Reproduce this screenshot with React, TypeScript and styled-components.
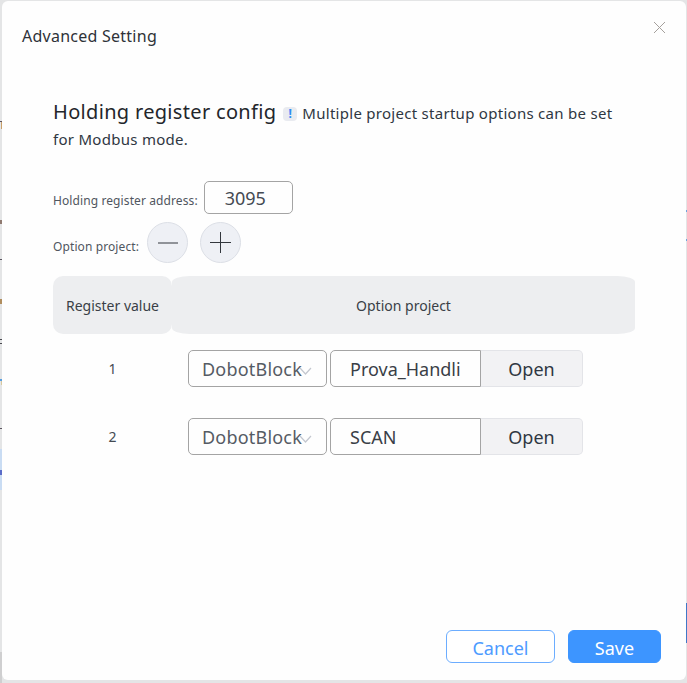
import React from "react";
import styled, { createGlobalStyle } from "styled-components";

const Global = createGlobalStyle`
  html, body { margin: 0; padding: 0; background: #e6e6e7; }
  body { font-family: "Noto Sans", "Open Sans", "Liberation Sans", sans-serif; color: #2b2f36; }
  * { box-sizing: border-box; }
`;

const tick = (color: string, x: number, y: number, w: number, h: number) =>
  `linear-gradient(${color}, ${color}) ${x}px ${y}px / ${w}px ${h}px no-repeat`;

const Page = styled.div`
  width: 687px;
  height: 683px;
  padding: 1px 1px 3px 2px;
  overflow: hidden;
  background:
    ${tick("#3f78c8", 686, 603, 1, 40)},
    ${tick("#6fa5dc", 686, 210, 1, 2)},
    ${tick("#6fa5dc", 686, 239, 1, 2)},
    ${tick("#c9a06a", 1, 122, 1, 7)},
    ${tick("#5b5560", 0, 121, 2, 1)},
    ${tick("#8f7a70", 0, 220, 2, 4)},
    ${tick("#5b5560", 0, 259, 2, 1)},
    ${tick("#b08d5e", 0, 299, 2, 5)},
    ${tick("#4a4a50", 0, 339, 2, 1)},
    ${tick("#4a4a50", 0, 343, 2, 1)},
    ${tick("#5aa0e0", 0, 379, 2, 2)},
    ${tick("#d8c9a0", 1, 381, 1, 4)},
    ${tick("#5b5560", 0, 428, 2, 1)},
    ${tick("#5a6cc8", 0, 470, 2, 5)},
    ${tick("#c9dcf3", 0, 449, 2, 41)},
    ${tick("#cfcfd0", 0, 652, 2, 31)},
    #e4e5e6;
`;

const Modal = styled.div`
  position: relative;
  width: 684px;
  height: 679px;
  background: #fefefe;
  border-radius: 6px;
  display: flex;
  flex-direction: column;
`;

const Header = styled.div`
  height: 70px;
  padding: 23px 0 0 20px;
  font-size: 16px;
  letter-spacing: 0.25px;
  line-height: 24px;
  color: #2e3238;
`;

const CloseButton = styled.button`
  position: absolute;
  top: 20px;
  right: 20px;
  width: 13px;
  height: 13px;
  padding: 0;
  border: 0;
  background: none;
  color: #a5a09c;
  display: flex;
`;

const Body = styled.div`
  flex: 1;
  padding: 28px 50px 0 51px;
  display: flex;
  flex-direction: column;
`;

const Intro = styled.div`
  width: 572px;
  font-size: 15px;
  letter-spacing: 0.28px;
  line-height: 26px;
  color: #2f3742;
`;

const Heading = styled.span`
  font-size: 20px;
  letter-spacing: 0.32px;
  color: #23262b;
  margin-right: 7px;
`;

const Notice = styled.span`
  display: inline-flex;
  width: 14px;
  height: 14px;
  border-radius: 4px;
  background: #e9ebf0;
  color: #2f8af5;
  font-size: 12px;
  font-weight: 700;
  line-height: 14px;
  justify-content: center;
  margin-right: 5px;
  vertical-align: 1px;
`;

const Field = styled.div<{ $top: number }>`
  display: flex;
  align-items: flex-end;
  margin-top: ${(p) => p.$top}px;
`;

const Label = styled.span<{ $lift: number; $gap: number }>`
  font-size: 12px;
  line-height: 16px;
  letter-spacing: 0.1px;
  color: #50565f;
  margin-right: ${(p) => p.$gap}px;
  margin-bottom: ${(p) => p.$lift}px;
`;

const Address = styled.div`
  width: 89px;
  height: 33px;
  border: 1px solid #a4a4a4;
  border-radius: 5px;
  font-size: 18px;
  line-height: 32px;
  padding-left: 20px;
  color: #444a52;
`;

const Round = styled.button`
  width: 41px;
  height: 41px;
  border-radius: 50%;
  border: 1px solid #dcdfe6;
  background: #eef0f5;
  padding: 0;
  margin-right: 12px;
  display: flex;
  align-items: center;
  justify-content: center;
  color: #33373d;
`;

const Table = styled.div`
  margin-top: 13px;
  width: 582px;
`;

const HeadRow = styled.div`
  display: grid;
  grid-template-columns: 119px 463px;
  height: 58px;
`;

const HeadCell = styled.div<{ $wide?: boolean }>`
  background: #edeef0;
  border-radius: ${(p) => (p.$wide ? "18px / 6px" : "10px")};
  display: flex;
  align-items: center;
  justify-content: center;
  font-size: 14px;
  color: #3a3f47;
`;

const Row = styled.div`
  display: grid;
  grid-template-columns: 119px 463px;
  height: 68px;
  align-items: center;
`;

const RowIndex = styled.div`
  text-align: center;
  font-size: 14px;
  color: #444a52;
`;

const Controls = styled.div`
  display: flex;
  align-items: center;
  padding-left: 16px;
`;

const Select = styled.div`
  position: relative;
  width: 139px;
  height: 37px;
  border: 1px solid #a4a4a4;
  border-radius: 5px;
  font-size: 18px;
  letter-spacing: 0.2px;
  line-height: 37px;
  padding-left: 13px;
  color: #555b64;
  margin-right: 3px;
  white-space: nowrap;
`;

const Chevron = styled.svg`
  position: absolute;
  right: 14px;
  top: 16px;
  width: 13px;
  height: 8px;
`;

const ProjectInput = styled.div`
  width: 151px;
  height: 37px;
  border: 1px solid #a4a4a4;
  border-radius: 5px 0 0 5px;
  font-size: 18px;
  line-height: 37px;
  padding-left: 19px;
  color: #3a3f47;
`;

const OpenButton = styled.button`
  width: 102px;
  height: 37px;
  border: 1px solid #e3e4e8;
  border-left: 0;
  border-radius: 0 5px 5px 0;
  background: #f2f2f4;
  font: inherit;
  font-size: 18px;
  color: #2f3742;
  padding: 2px 0 0;
`;

const Footer = styled.div`
  display: flex;
  justify-content: flex-end;
  gap: 13px;
  padding: 0 25px 17px 0;
`;

const ActionButton = styled.button<{ $primary?: boolean }>`
  width: ${(p) => (p.$primary ? 93 : 109)}px;
  height: 33px;
  border-radius: 6px;
  border: 1px solid ${(p) => (p.$primary ? "#3d95ff" : "#6cadff")};
  background: ${(p) => (p.$primary ? "#3d95ff" : "#fff")};
  color: ${(p) => (p.$primary ? "#fff" : "#4d9bff")};
  font: inherit;
  font-size: 18px;
  padding: 2px 0 0;
`;

const rows = [
  { id: 1, name: "Prova_Handli" },
  { id: 2, name: "SCAN" },
];

export default function App() {
  return (
    <Page>
      <Global />
      <Modal>
        <Header>Advanced Setting</Header>
        <CloseButton aria-label="close">
          <svg width="13" height="13" viewBox="0 0 13 13" fill="none" stroke="currentColor" strokeWidth="1">
            <path d="M1 1l11 11M12 1L1 12" />
          </svg>
        </CloseButton>
        <Body>
          <Intro>
            <Heading>Holding register config</Heading>
            <Notice>!</Notice>
            Multiple project startup options can be set for Modbus mode.
          </Intro>
          <Field $top={29}>
            <Label $lift={5} $gap={6}>Holding register address:</Label>
            <Address>3095</Address>
          </Field>
          <Field $top={8}>
            <Label $lift={8} $gap={8}>Option project:</Label>
            <Round aria-label="remove">
              <svg width="20" height="2" viewBox="0 0 20 2"><path d="M0 1h20" stroke="currentColor" strokeWidth="1" /></svg>
            </Round>
            <Round aria-label="add">
              <svg width="21" height="21" viewBox="0 0 21 21"><path d="M0 10.5h21M10.5 0v21" stroke="currentColor" strokeWidth="1" /></svg>
            </Round>
          </Field>
          <Table>
            <HeadRow>
              <HeadCell>Register value</HeadCell>
              <HeadCell $wide>Option project</HeadCell>
            </HeadRow>
            {rows.map((r) => (
              <Row key={r.id}>
                <RowIndex>{r.id}</RowIndex>
                <Controls>
                  <Select>
                    DobotBlock
                    <Chevron viewBox="0 0 13 8" fill="none" stroke="#c3c7cf" strokeWidth="1.2">
                      <path d="M1 1l5.5 6L12 1" />
                    </Chevron>
                  </Select>
                  <ProjectInput>{r.name}</ProjectInput>
                  <OpenButton>Open</OpenButton>
                </Controls>
              </Row>
            ))}
          </Table>
        </Body>
        <Footer>
          <ActionButton>Cancel</ActionButton>
          <ActionButton $primary>Save</ActionButton>
        </Footer>
      </Modal>
    </Page>
  );
}
